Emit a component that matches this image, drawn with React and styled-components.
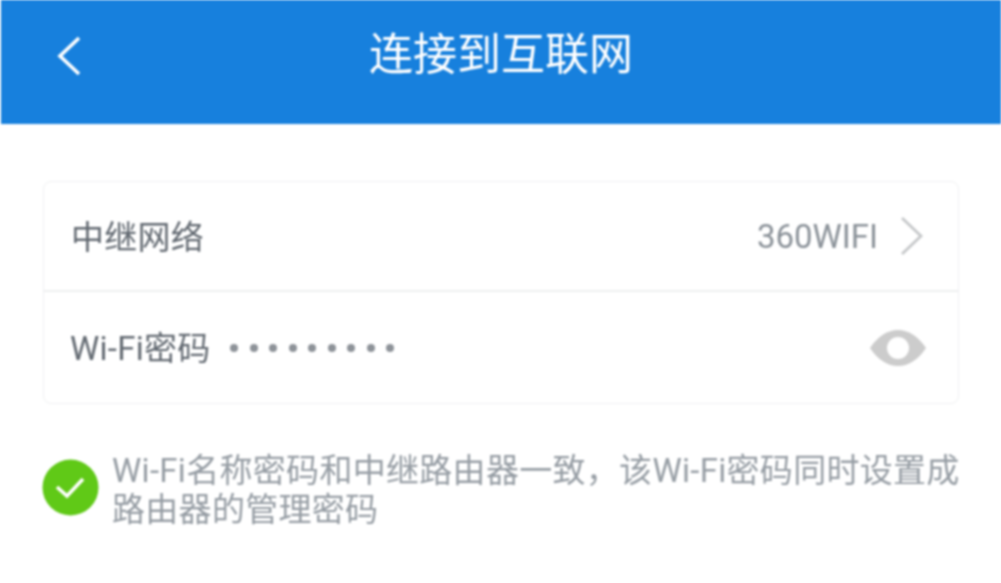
import React from "react";
import styled, { createGlobalStyle } from "styled-components";

const Global = createGlobalStyle`
  html, body { margin: 0; padding: 0; background: #fff; }
  body { font-family: Roboto, "Noto Sans CJK SC", sans-serif; }
  #root { width: 1001px; height: 583px; overflow: hidden; }
`;

const Page = styled.div`
  width: 1001px;
  height: 583px;
  background: #fff;
  filter: blur(0.8px);
`;

const Header = styled.header`
  height: 124px;
  margin-left: 1px;
  background: #1780dd;
  display: grid;
  grid-template-columns: 81px 1fr 81px;
  align-items: center;
  padding: 0 0 14px;
  box-sizing: border-box;
`;

const BackButton = styled.div`
  display: flex;
  justify-content: flex-end;
  color: #fff;
  margin-top: 2px;
`;

const Title = styled.h1`
  margin: 0;
  text-align: center;
  color: #fff;
  font-size: 44px;
  line-height: 56px;
  font-weight: 400;
`;

const Body = styled.main`
  padding: 57px 42px 0 43px;
`;

const Card = styled.section`
  height: 223px;
  box-sizing: border-box;
  border: 1px solid #f0f1f2;
  border-radius: 8px;
  display: flex;
  flex-direction: column;
`;

const Row = styled.div`
  display: flex;
  align-items: center;
  box-sizing: border-box;
  height: ${(p) => (p.$last ? "111px" : "110px")};
  padding: ${(p) => (p.$last ? "0 32px 0 26px" : "0 34px 0 27px")};
  border-bottom: ${(p) => (p.$last ? "none" : "2px solid #eeeff0")};
`;

const Label = styled.span`
  color: #626971;
  font-size: 33px;
  line-height: 40px;
  letter-spacing: 0.25px;
  margin-top: ${(p) => (p.$last ? "2px" : "3px")};
`;

const Value = styled.span`
  margin-left: auto;
  color: #8b9299;
  font-size: 33px;
  line-height: 40px;
  margin-top: 2px;
`;

const Dots = styled.div`
  display: flex;
  gap: 11.5px;
  margin-left: 20px;
`;

const Dot = styled.span`
  width: 8px;
  height: 8px;
  border-radius: 50%;
  background: #8d9298;
`;

const ChevronWrap = styled.span`
  display: flex;
  margin-left: 22px;
`;

const EyeWrap = styled.span`
  display: flex;
  margin-left: auto;
`;

const Note = styled.div`
  margin-top: 47px;
  display: flex;
  align-items: center;
  gap: 13px;
  margin-left: -1px;
`;

const Check = styled.svg`
  flex: none;
  width: 57px;
  height: 57px;
  margin-top: -5px;
`;

const NoteText = styled.p`
  flex: none;
  margin: 0;
  width: 850px;
  color: #969da4;
  font-size: 33px;
  line-height: 39px;
  letter-spacing: 0.3px;
`;

export default function App() {
  return (
    <Page>
      <Global />
      <Header>
        <BackButton>
          <svg width="26" height="42" viewBox="0 0 26 42" fill="none">
            <path d="M23 3 L4 21 L23 39" stroke="#fff" strokeWidth="3.6" />
          </svg>
        </BackButton>
        <Title>连接到互联网</Title>
      </Header>
      <Body>
        <Card>
          <Row>
            <Label>中继网络</Label>
            <Value>360WIFI</Value>
            <ChevronWrap>
              <svg width="24" height="40" viewBox="0 0 24 40" fill="none">
                <path d="M2 2 L21 20 L2 38" stroke="#c6c8ca" strokeWidth="2.8" />
              </svg>
            </ChevronWrap>
          </Row>
          <Row $last>
            <Label $last>Wi-Fi密码</Label>
            <Dots>
              {Array.from({ length: 9 }, (_, i) => (
                <Dot key={i} />
              ))}
            </Dots>
            <EyeWrap>
              <svg width="56" height="38" viewBox="0 0 56 38">
                <path
                  d="M0 19 C8 7 18 1 28 1 C38 1 48 7 56 19 C48 31 38 37 28 37 C18 37 8 31 0 19 Z"
                  fill="#cccccc"
                />
                <circle cx="28" cy="19" r="11" fill="#fff" />
              </svg>
            </EyeWrap>
          </Row>
        </Card>
        <Note>
          <Check viewBox="0 0 57 57">
            <circle cx="28.5" cy="28.5" r="28" fill="#60c917" />
            <path d="M15 28 L25 37 L41 20" fill="none" stroke="#fff" strokeWidth="3.6" />
          </Check>
          <NoteText>Wi-Fi名称密码和中继路由器一致，该Wi-Fi密码同时设置成路由器的管理密码</NoteText>
        </Note>
      </Body>
    </Page>
  );
}
